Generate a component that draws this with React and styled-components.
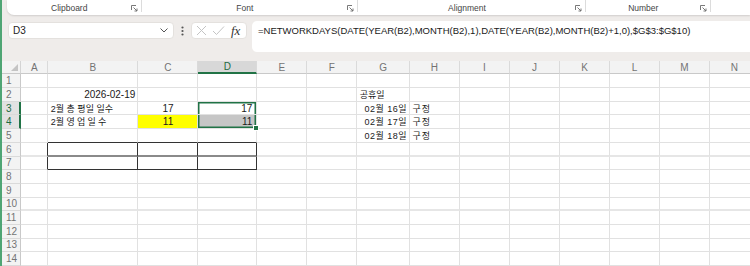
import React from 'react'
import styled, { createGlobalStyle, css } from 'styled-components'

const GlobalStyle = createGlobalStyle`
  html, body {
    margin: 0;
    padding: 0;
    background: #efecea;
  }
`;

const Window = styled.div`
  width: 750px;
  height: 266px;
  overflow: hidden;
  box-sizing: border-box;
  border-left: 2px solid #4fa574;
  background: #efecea;
  display: flex;
  flex-direction: column;
  font-family: "Liberation Sans", "Noto Sans CJK KR", sans-serif;
`;

/* ---------- ribbon ---------- */

const RibbonWrap = styled.div`
  height: 16px;
  padding-left: 5px;
  display: flex;
`;

const RibbonPanel = styled.div`
  flex: 1;
  display: flex;
  background: #fff;
  border-radius: 0 0 0 7px;
  box-shadow: 0 1px 2px rgba(0, 0, 0, 0.13);
`;

const Group = styled.div`
  position: relative;
  width: ${p => p.$w}px;
  display: flex;
  align-items: center;
  justify-content: center;
  padding-right: 10px;
  box-sizing: border-box;
  font-size: 8.5px;
  color: #444;

  &::after {
    content: '';
    position: absolute;
    right: 0;
    top: 0;
    bottom: 3px;
    width: 1px;
    background: #dcdcdc;
  }
`;

const Launcher = styled.svg`
  position: absolute;
  right: 4px;
  top: 5px;
`;

const DialogLauncher = () => (
  <Launcher width="7" height="7" viewBox="0 0 7 7" fill="none" stroke="#6a6a6a" strokeWidth="0.9">
    <path d="M0.5 5V0.5H5" />
    <path d="M2.5 2.5L6 6M6 3.5V6H3.5" />
  </Launcher>
);

/* ---------- formula bar ---------- */

const FormulaRow = styled.div`
  margin-top: 6px;
  height: 31px;
  display: flex;
  align-items: flex-start;
  padding-left: 6px;
`;

const NameBox = styled.div`
  margin-top: 1px;
  width: 166px;
  height: 17px;
  box-sizing: border-box;
  background: #fff;
  border: 1px solid #e4e1de;
  border-radius: 4px;
  display: flex;
  align-items: center;
  justify-content: space-between;
  padding: 0 5px 0 4px;
  font-size: 10px;
  color: #222;
`;

const Kebab = styled.svg`
  margin: 5px 7px 0 7px;
`;

const FxBox = styled.div`
  margin-top: 1px;
  width: 56px;
  height: 17px;
  box-sizing: border-box;
  background: #fff;
  border: 1px solid #e4e1de;
  border-radius: 4px;
  display: flex;
  align-items: center;
  padding-left: 4px;
  gap: 5px;
`;

const Fx = styled.span`
  font-family: "Liberation Serif", serif;
  font-style: italic;
  font-size: 13px;
  color: #333;
  margin-left: 1px;
  line-height: 1;
`;

const FormulaInput = styled.div`
  margin-left: 5px;
  flex: 1;
  height: 31px;
  background: #fff;
  border-radius: 5px 0 0 5px;
  padding: 4px 0 0 6px;
  box-sizing: border-box;
  font-size: 9.5px;
  color: #1a1a1a;
  white-space: nowrap;
`;

/* ---------- sheet ---------- */

const COLS = [
  { key: 'A', w: 27 }, { key: 'B', w: 90 }, { key: 'C', w: 60 }, { key: 'D', w: 59 },
  { key: 'E', w: 50 }, { key: 'F', w: 50 }, { key: 'G', w: 52.7 }, { key: 'H', w: 50 },
  { key: 'I', w: 50 }, { key: 'J', w: 50 }, { key: 'K', w: 50 }, { key: 'L', w: 50 },
  { key: 'M', w: 50 }, { key: 'N', w: 50 },
];
const ROW_COUNT = 14;
const ACTIVE_COL = 'D';
const ACTIVE_ROWS = [3, 4];
const PAGE_BREAK_ROWS = [6, 10];

const Sheet = styled.div`
  margin-top: 8.5px;
  display: grid;
  grid-template-columns: 19.3px ${COLS.map(c => c.w + 'px').join(' ')};
  grid-template-rows: 13.5px;
  grid-auto-rows: 13.7px;
`;

const Corner = styled.div`
  background: #f3f3f3;
  border-right: 1px solid #d4d4d4;
  border-bottom: 1px solid #c9c9c9;
  display: flex;
  align-items: flex-end;
  justify-content: flex-end;
  padding: 0 2px 2px 0;
`;

const ColHead = styled.div`
  box-sizing: border-box;
  background: ${p => (p.$active ? '#d8d8d8' : '#f3f3f3')};
  border-right: 1px solid #dadada;
  border-bottom: ${p => (p.$active ? '2px solid #217346' : '1px solid #c9c9c9')};
  color: ${p => (p.$active ? '#1e6b41' : '#737373')};
  font-size: 10px;
  display: flex;
  align-items: center;
  justify-content: center;
`;

const RowHead = styled.div`
  box-sizing: border-box;
  background: ${p => (p.$active ? '#e2e2e2' : '#f3f3f3')};
  border-right: ${p => (p.$active ? '2px solid #217346' : '1px solid #c9c9c9')};
  border-bottom: 1px solid #dadada;
  color: ${p => (p.$active ? '#1e6b41' : '#737373')};
  font-size: 10px;
  display: flex;
  align-items: center;
  padding-left: 4px;
`;

const justify = { left: 'flex-start', center: 'center', right: 'flex-end' };

const Cell = styled.div`
  position: relative;
  box-sizing: border-box;
  background: ${p => p.$bg || '#fff'};
  border-right: 1px solid ${p => p.$rc || '#e1e1e1'};
  border-bottom: ${p => p.$bw || 1}px solid ${p => p.$bc || '#e1e1e1'};
  display: flex;
  align-items: center;
  justify-content: ${p => justify[p.$align || 'left']};
  padding: 0 2px 0 2.5px;
  font-size: ${p => (p.$ko ? '9px' : '10px')};
  letter-spacing: ${p => p.$ls || 0}px;
  white-space: nowrap;
  color: #1a1a1a;

  ${p => p.$sel === 'top' && css`
    padding-right: 4px;
    box-shadow: inset 0 1.5px #217346, inset 1.5px 0 #217346, inset -1.5px 0 #217346;
  `}

  ${p => p.$sel === 'bottom' && css`
    z-index: 2;
    padding-right: 4px;
    background: #c6c6c6;
    box-shadow: inset 1.5px 0 #217346, inset -1.5px 0 #217346, inset 0 -1.5px #217346;

    &::after {
      content: '';
      position: absolute;
      right: -3px;
      bottom: -3px;
      width: 4px;
      height: 4px;
      background: #217346;
      border: 1px solid #fff;
    }
  `}
`;

const Spread = styled.span`
  letter-spacing: ${p => p.$ls}px;
`;

const DATA = {
  B2: { text: '2026-02-19', align: 'right' },
  B3: { text: '2월 총 평일 일수', ko: true },
  B4: { text: <span>2월 <Spread $ls={2.2}>영업일수</Spread></span>, ko: true },
  C3: { text: '17', align: 'center' },
  C4: { text: '11', align: 'center', bg: '#ffff00' },
  D3: { text: '17', align: 'right', sel: 'top' },
  D4: { text: '11', align: 'right', sel: 'bottom' },
  G2: { text: '공휴일', ko: true },
  G3: { text: '02월 16일', align: 'right', ko: true, ls: 0.5 },
  H3: { text: '구정', ko: true, ls: 1 },
  G4: { text: '02월 17일', align: 'right', ko: true, ls: 0.5 },
  H4: { text: '구정', ko: true, ls: 1 },
  G5: { text: '02월 18일', align: 'right', ko: true, ls: 0.5 },
  H5: { text: '구정', ko: true, ls: 1 },
};

const BOXED = ['B', 'C', 'D'];

const cellBorders = (col, row) => {
  const b = {};
  if (PAGE_BREAK_ROWS.includes(row)) {
    b.bw = 2;
    b.bc = '#e6e6e6';
  }
  if (BOXED.includes(col)) {
    if (row === 5) b.bc = '#333';
    if (row === 6) { b.bc = '#8a8a8a'; b.bw = 2; }
    if (row === 7) { b.bc = '#333'; b.bw = 1; }
    if (row === 6 || row === 7) b.rc = '#333';
  }
  if (col === 'A' && (row === 6 || row === 7)) b.rc = '#333';
  return b;
};

const Chevron = () => (
  <svg width="8" height="5" viewBox="0 0 8 5" fill="none" stroke="#555" strokeWidth="1">
    <path d="M0.5 0.5L4 4L7.5 0.5" />
  </svg>
);

const App = () => {
  const rows = [];
  for (let r = 1; r <= ROW_COUNT; r++) {
    rows.push(
      <RowHead key={'h' + r} $active={ACTIVE_ROWS.includes(r)}>{r}</RowHead>
    );
    COLS.forEach(({ key }) => {
      const id = key + r;
      const d = DATA[id] || {};
      const b = cellBorders(key, r);
      rows.push(
        <Cell
          key={id}
          $align={d.align}
          $bg={d.bg}
          $ko={d.ko}
          $ls={d.ls}
          $sel={d.sel}
          $bw={b.bw}
          $bc={b.bc}
          $rc={b.rc}
        >
          {d.text}
        </Cell>
      );
    });
  }

  return (
    <Window>
      <GlobalStyle />
      <RibbonWrap>
        <RibbonPanel>
          <Group $w={134.5}>Clipboard<DialogLauncher /></Group>
          <Group $w={216.5}>Font<DialogLauncher /></Group>
          <Group $w={228}>Alignment<DialogLauncher /></Group>
          <Group $w={124.5}>Number<DialogLauncher /></Group>
        </RibbonPanel>
      </RibbonWrap>

      <FormulaRow>
        <NameBox>
          D3
          <Chevron />
        </NameBox>
        <Kebab width="3" height="10" viewBox="0 0 3 10" fill="#555">
          <circle cx="1.5" cy="1.5" r="1.1" />
          <circle cx="1.5" cy="5" r="1.1" />
          <circle cx="1.5" cy="8.5" r="1.1" />
        </Kebab>
        <FxBox>
          <svg width="11" height="11" viewBox="0 0 11 11" fill="none" stroke="#c4c4c4" strokeWidth="1">
            <path d="M1 1L10 10M10 1L1 10" />
          </svg>
          <svg width="13" height="11" viewBox="0 0 13 11" fill="none" stroke="#c4c4c4" strokeWidth="1">
            <path d="M1 6L4.5 9.5L12 1.5" />
          </svg>
          <Fx>fx</Fx>
        </FxBox>
        <FormulaInput>
          =NETWORKDAYS(DATE(YEAR(B2),MONTH(B2),1),DATE(YEAR(B2),MONTH(B2)+1,0),$G$3:$G$10)
        </FormulaInput>
      </FormulaRow>

      <Sheet>
        <Corner>
          <svg width="7" height="7" viewBox="0 0 7 7">
            <path d="M7 0V7H0Z" fill="#c4c4c4" />
          </svg>
        </Corner>
        {COLS.map(({ key }) => (
          <ColHead key={key} $active={key === ACTIVE_COL}>{key}</ColHead>
        ))}
        {rows}
      </Sheet>
    </Window>
  )
}

export default App
